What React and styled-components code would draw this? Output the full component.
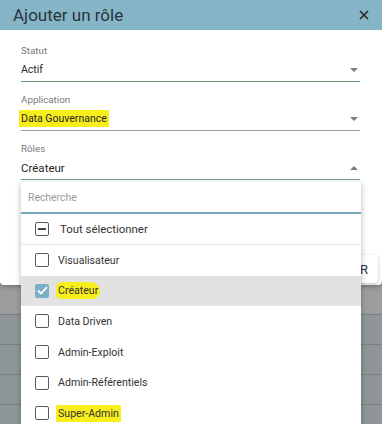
import React from 'react';
import styled, { createGlobalStyle } from 'styled-components';

const GlobalStyle = createGlobalStyle`
  html, body {
    margin: 0;
    padding: 0;
  }
  body {
    font-family: Roboto, "Liberation Sans", Arial, sans-serif;
    color: #333;
  }
`;

const Page = styled.div`
  position: relative;
  width: 382px;
  height: 424px;
  overflow: hidden;
  background: #8f9698;
`;

const Backdrop = styled.div`
  display: flex;
  flex-direction: column;
  padding-top: 285px;
`;

const BackdropRow = styled.div`
  height: 29px;
  border-bottom: 1px solid #7b8082;
  background: ${(p) => (p.$light ? '#9c9d9d' : '#8e9699')};
`;

const Modal = styled.div`
  position: absolute;
  top: 0;
  left: 0;
  width: 382px;
  background: #fff;
  border-radius: 0 0 4px 4px;
  box-shadow: 0 2px 4px rgba(0, 0, 0, 0.25);
`;

const Header = styled.div`
  height: 30px;
  display: flex;
  align-items: center;
  justify-content: space-between;
  padding: 0 12px 0 13px;
  background: #87b5c8;
`;

const Title = styled.div`
  font-size: 17px;
  color: #26343a;
`;

const CloseButton = styled.button`
  border: 0;
  background: none;
  padding: 0;
  width: 12px;
  height: 12px;
  display: flex;
  align-items: center;
  justify-content: center;
`;

const Body = styled.div`
  height: 255px;
  display: flex;
  flex-direction: column;
  padding: 14px 22px 0 21px;
  box-sizing: border-box;
`;

const Field = styled.div`
  display: flex;
  flex-direction: column;
  margin-bottom: 11px;
`;

const Label = styled.div`
  font-size: 9.8px;
  line-height: 14px;
  color: #7a7a7a;
`;

const ValueRow = styled.div`
  height: 23px;
  display: flex;
  align-items: center;
  justify-content: space-between;
  border-bottom: 1px solid ${(p) => (p.$active ? '#6d9e7c' : '#9e9e9e')};
  font-size: ${(p) => (p.$large ? '11.5px' : '10.5px')};
  color: #262626;
`;

const Marker = styled.span`
  background: #f8ee1c;
  padding: 2px 2px;
  margin-left: -2px;
  border-radius: ${(p) => (p.$brush ? '6px 10px 8px 5px' : '1px')};
`;

const Caret = styled.span`
  width: 0;
  height: 0;
  margin-right: 2px;
  border-left: 4.5px solid transparent;
  border-right: 4.5px solid transparent;
  ${(p) =>
    p.$up
      ? 'border-bottom: 4.5px solid #7d7d7d;'
      : 'border-top: 4.5px solid #7d7d7d;'}
`;

const Footer = styled.div`
  margin-top: auto;
  display: flex;
  justify-content: flex-end;
  margin-right: -18px;
  padding-bottom: 2px;
`;

const ActionButton = styled.button`
  height: 28px;
  padding: 0 10px 0 12px;
  border: 0;
  border-radius: 3px;
  background: #fff;
  box-shadow: 0 1px 3px rgba(0, 0, 0, 0.3);
  font-family: Roboto, "Liberation Sans", Arial, sans-serif;
  font-size: 13px;
  color: #333;
  text-transform: uppercase;
`;

const Menu = styled.div`
  position: absolute;
  top: 182px;
  left: 21px;
  width: 340px;
  background: #fff;
  box-shadow: 0 2px 6px rgba(0, 0, 0, 0.3);
  display: flex;
  flex-direction: column;
`;

const Search = styled.input`
  height: 30px;
  border: 0;
  border-bottom: 2px solid #7aa7b6;
  padding: 0 7px;
  font-family: Roboto, "Liberation Sans", Arial, sans-serif;
  font-size: 10.4px;
  outline: none;
  &::placeholder {
    color: #9a9a9a;
  }
`;

const SelectAllRow = styled.div`
  height: 30px;
  display: flex;
  align-items: center;
  gap: 11px;
  padding-left: 14px;
  border-bottom: 1px solid #e6e6e6;
  font-size: 11.4px;
  color: #333;
`;

const OptionRow = styled.div`
  height: 30.6px;
  display: flex;
  align-items: center;
  gap: 9px;
  padding-left: 14px;
  font-size: 10.6px;
  color: #333;
  background: ${(p) => (p.$selected ? '#e2e2e2' : '#fff')};
`;

const Box = styled.span`
  width: 14px;
  height: 14px;
  box-sizing: border-box;
  border-radius: 2px;
  display: flex;
  align-items: center;
  justify-content: center;
  border: ${(p) => (p.$checked ? '0' : '1.3px solid #5a5a5a')};
  background: ${(p) => (p.$checked ? '#7aafc5' : '#fff')};
`;

const Dash = styled.span`
  width: 8px;
  height: 1.5px;
  background: #444;
`;

const options = [
  { label: 'Visualisateur' },
  { label: 'Créateur', selected: true, mark: 'brush' },
  { label: 'Data Driven' },
  { label: 'Admin-Exploit' },
  { label: 'Admin-Référentiels' },
  { label: 'Super-Admin', mark: 'flat' },
];

const Check = () => (
  <svg width="11" height="9" viewBox="0 0 11 9">
    <path d="M1 4.5 L4 7.5 L10 1.2" fill="none" stroke="#fff" strokeWidth="1.8" />
  </svg>
);

const CloseIcon = () => (
  <svg width="10" height="10" viewBox="0 0 10 10">
    <path d="M1 1 L9 9 M9 1 L1 9" stroke="#2b2b2b" strokeWidth="1.7" />
  </svg>
);

export default function App() {
  return (
    <Page>
      <GlobalStyle />
      <Backdrop>
        <BackdropRow $light />
        <BackdropRow />
        <BackdropRow />
        <BackdropRow />
        <BackdropRow />
      </Backdrop>
      <Modal>
        <Header>
          <Title>Ajouter un rôle</Title>
          <CloseButton>
            <CloseIcon />
          </CloseButton>
        </Header>
        <Body>
          <Field>
            <Label>Statut</Label>
            <ValueRow $active>
              <span>Actif</span>
              <Caret />
            </ValueRow>
          </Field>
          <Field>
            <Label>Application</Label>
            <ValueRow>
              <Marker>Data Gouvernance</Marker>
              <Caret />
            </ValueRow>
          </Field>
          <Field>
            <Label>Rôles</Label>
            <ValueRow $active $large>
              <span>Créateur</span>
              <Caret $up />
            </ValueRow>
          </Field>
          <Footer>
            <ActionButton>Ajouter</ActionButton>
          </Footer>
        </Body>
      </Modal>
      <Menu>
        <Search placeholder="Recherche" />
        <SelectAllRow>
          <Box>
            <Dash />
          </Box>
          <span>Tout sélectionner</span>
        </SelectAllRow>
        {options.map((o) => (
          <OptionRow key={o.label} $selected={o.selected}>
            <Box $checked={o.selected}>{o.selected && <Check />}</Box>
            {o.mark ? <Marker $brush={o.mark === 'brush'}>{o.label}</Marker> : <span>{o.label}</span>}
          </OptionRow>
        ))}
      </Menu>
    </Page>
  );
}
